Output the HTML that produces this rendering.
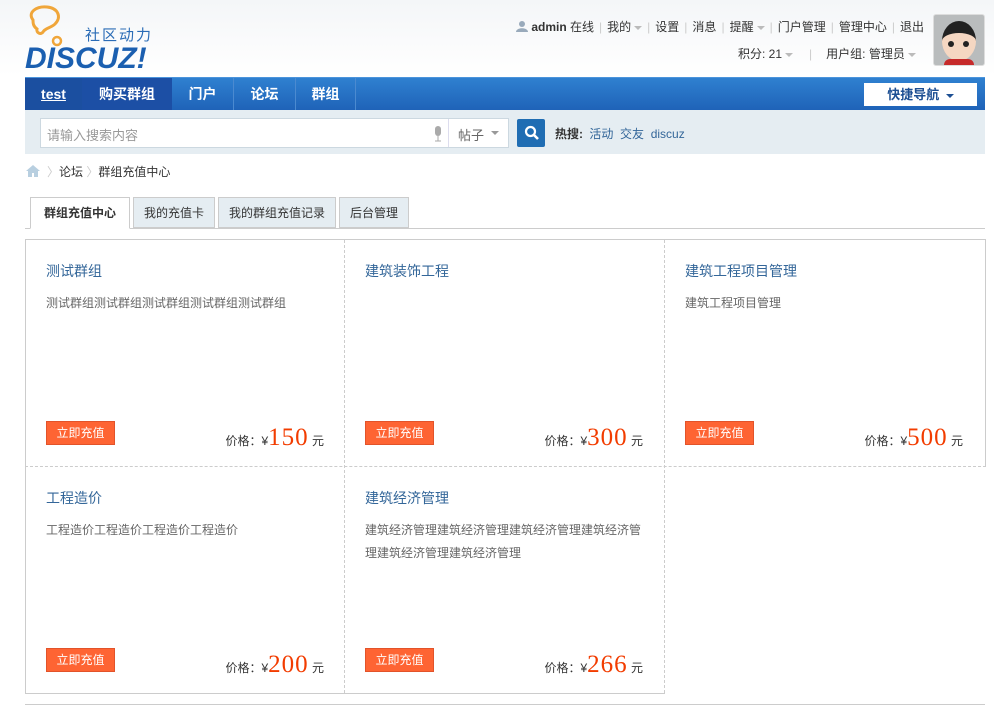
<!DOCTYPE html>
<html><head><meta charset="utf-8"><style>
*{margin:0;padding:0;box-sizing:border-box}
body{width:994px;height:710px;overflow:hidden;background:#fff;font-family:"Liberation Sans","Noto Sans CJK SC",sans-serif;font-size:12px;color:#333;position:relative}
.a{position:absolute}
#hd{left:0;top:0;width:994px;height:76px;background:linear-gradient(#f4f6f8,#fff)}
.top{top:18px;right:70px;font-size:12px;color:#333;white-space:nowrap}
.top span.sep{color:#ccc;margin:0 5px}
.tri{display:inline-block;width:0;height:0;border-left:4px solid transparent;border-right:4px solid transparent;border-top:4px solid #bbb;vertical-align:middle;margin-left:3px}
#nav{left:25px;top:77px;width:960px;height:33px;background:linear-gradient(#2f80d0,#1f63b8);border-top:1px solid #4b94dc}
#nav div{position:absolute;top:0;height:33px;line-height:33px;color:#fff;font-weight:bold;font-size:14px;text-align:center}
.sr{left:25px;top:110px;width:960px;height:44px;background:#e5edf2}
.cell{position:absolute;width:320px;height:227px}
.ct{position:absolute;left:21px;top:21px;font-size:14px;color:#336699}
.cd{position:absolute;left:21px;top:52px;font-size:12px;color:#666;line-height:23px;width:280px}
.btn{position:absolute;left:21px;top:181px;width:69px;height:24px;background:#fe6433;border:1px solid #e2532a;color:#fff;font-size:12px;line-height:22px;text-align:center}
.pr{position:absolute;right:21px;top:184px;font-size:12px;color:#333;white-space:nowrap}
.pr b{font-family:"Liberation Serif",serif;font-weight:normal;font-size:25px;letter-spacing:1px;color:#f23c00}
.tab{position:absolute;top:197px;height:31px;border:1px solid #ccc;background:#e5edf2;line-height:30px;text-align:center;font-size:12px}
</style></head><body>
<div id="hd" class="a"></div>
<svg class="a" style="left:25px;top:4px" width="140" height="68">
<path d="M8 16 C2 8 12 2 22 3 C33 4 37 13 30 20 C26 24 20 24 18 28 C16 31 11 29 12 25 C8 22 8 19 8 16Z" fill="none" stroke="#f0a63a" stroke-width="3"/>
<circle cx="32" cy="37" r="4" fill="none" stroke="#f0a63a" stroke-width="2.5"/>
<text x="60" y="36" font-size="15" fill="#2b6cb6" font-family="Noto Sans CJK SC,sans-serif" letter-spacing="2">社区动力</text>
<text x="0" y="64" font-size="30" font-weight="bold" font-style="italic" fill="#1b5fb0" font-family="Liberation Sans,sans-serif">DISCUZ!</text>
</svg>
<div class="a top"><svg width="12" height="12" style="vertical-align:-1px"><circle cx="6" cy="4" r="3" fill="#9ab"/><path d="M0 12 C0 7 12 7 12 12Z" fill="#9ab"/></svg> <b>admin</b> 在线<span class="sep">|</span>我的<i class="tri"></i><span class="sep">|</span>设置<span class="sep">|</span>消息<span class="sep">|</span>提醒<i class="tri"></i><span class="sep">|</span>门户管理<span class="sep">|</span>管理中心<span class="sep">|</span>退出</div>
<div class="a" style="top:45px;left:738px;white-space:nowrap">积分: 21<i class="tri"></i><span style="color:#ccc;margin:0 14px 0 16px">|</span>用户组: 管理员<i class="tri"></i></div>
<div class="a" style="left:933px;top:14px;width:52px;height:52px;border:1px solid #ddd;border-radius:3px;background:#b9bcbd;overflow:hidden">
<div class="a" style="left:8px;top:6px;width:34px;height:40px;border-radius:50%;background:#f5d7c2;border-top:12px solid #222"></div>
<div class="a" style="left:14px;top:26px;width:6px;height:6px;border-radius:50%;background:#222"></div>
<div class="a" style="left:29px;top:26px;width:6px;height:6px;border-radius:50%;background:#222"></div>
<div class="a" style="left:10px;top:44px;width:30px;height:10px;background:#c62a2a;border-radius:6px 6px 0 0"></div></div>
<div id="nav" class="a">
<div style="left:0;width:57px;background:#1b4fa0;text-decoration:underline">test</div>
<div style="left:57px;width:90px;background:#1c4fa5">购买群组</div>
<div style="left:147px;width:62px;border-right:1px solid #4b8ad0">门户</div>
<div style="left:209px;width:62px;border-right:1px solid #4b8ad0">论坛</div>
<div style="left:271px;width:60px;border-right:1px solid #4b8ad0">群组</div>
<div style="left:839px;top:5px;width:113px;height:23px;line-height:23px;background:#fff;color:#1d4f93;font-size:13px">快捷导航 <i class="tri" style="border-top-color:#1d4f93"></i></div>
</div>
<div class="a sr"></div>
<div class="a" style="left:40px;top:118px;width:469px;height:30px;background:#fff;border:1px solid #ccd8e0"></div>
<div class="a" style="left:47px;top:125px;color:#999;font-size:13px">请输入搜索内容</div>
<svg class="a" style="left:433px;top:126px" width="10" height="16"><rect x="2" y="0" width="6" height="10" rx="3" fill="#aaa"/><path d="M5 10v5M2 15h6" stroke="#aaa"/></svg>
<div class="a" style="left:448px;top:119px;width:1px;height:28px;background:#dde"></div>
<div class="a" style="left:458px;top:125px;color:#666;font-size:13px">帖子</div>
<i class="a tri" style="left:488px;top:131px;border-top-color:#999"></i>
<div class="a" style="left:517px;top:119px;width:28px;height:28px;background:#1f6db3;border-radius:2px"></div>
<svg class="a" style="left:524px;top:125px" width="16" height="16"><circle cx="6.5" cy="6.5" r="4.5" stroke="#fff" stroke-width="2.2" fill="none"/><path d="M10 10l4 4" stroke="#fff" stroke-width="2.6"/></svg>
<div class="a" style="left:555px;top:125px;color:#333;white-space:nowrap"><b>热搜:</b> <span style="color:#336699;margin-left:3px">活动</span>&nbsp; <span style="color:#336699">交友</span>&nbsp; <span style="color:#336699">discuz</span></div>
<svg class="a" style="left:25px;top:164px" width="16" height="14"><path d="M8 1L1 7h2v6h4v-4h2v4h4V7h2Z" fill="#b8cfe0"/></svg>
<div class="a" style="left:47px;top:163px;color:#333"><span style="color:#ccc">〉</span>论坛 <span style="color:#ccc">〉</span>群组充值中心</div>
<div class="a" style="left:25px;top:228px;width:960px;height:1px;background:#ccc"></div>
<div class="tab" style="left:30px;width:100px;background:#fff;border-bottom-color:#fff;font-weight:bold;height:32px">群组充值中心</div>
<div class="tab" style="left:133px;width:82px">我的充值卡</div>
<div class="tab" style="left:218px;width:118px">我的群组充值记录</div>
<div class="tab" style="left:339px;width:70px">后台管理</div>
<div class="a" style="left:25px;top:239px;width:961px;height:1px;background:#ccc"></div>
<div class="a" style="left:25px;top:239px;width:1px;height:455px;background:#ccc"></div>
<div class="a" style="left:985px;top:239px;width:1px;height:228px;background:#ccc"></div>
<div class="a" style="left:25px;top:466px;width:961px;border-top:1px dashed #ccc"></div>
<div class="a" style="left:25px;top:693px;width:640px;height:1px;background:#ccc"></div>
<div class="a" style="left:344px;top:240px;height:453px;border-left:1px dashed #ccc"></div>
<div class="a" style="left:664px;top:240px;height:453px;border-left:1px dashed #ccc"></div>
<div class="a" style="left:25px;top:704px;width:960px;height:1px;background:#ccc"></div>
<div class="cell" style="left:25px;top:240px"><div class="ct">测试群组</div><div class="cd">测试群组测试群组测试群组测试群组测试群组</div><div class="btn">立即充值</div><div class="pr">价格：¥<b>150</b> 元</div></div>
<div class="cell" style="left:344px;top:240px"><div class="ct">建筑装饰工程</div><div class="btn">立即充值</div><div class="pr">价格：¥<b>300</b> 元</div></div>
<div class="cell" style="left:664px;top:240px"><div class="ct">建筑工程项目管理</div><div class="cd">建筑工程项目管理</div><div class="btn">立即充值</div><div class="pr">价格：¥<b>500</b> 元</div></div>
<div class="cell" style="left:25px;top:467px"><div class="ct">工程造价</div><div class="cd">工程造价工程造价工程造价工程造价</div><div class="btn">立即充值</div><div class="pr">价格：¥<b>200</b> 元</div></div>
<div class="cell" style="left:344px;top:467px"><div class="ct">建筑经济管理</div><div class="cd">建筑经济管理建筑经济管理建筑经济管理建筑经济管理建筑经济管理建筑经济管理</div><div class="btn">立即充值</div><div class="pr">价格：¥<b>266</b> 元</div></div>
</body></html>
